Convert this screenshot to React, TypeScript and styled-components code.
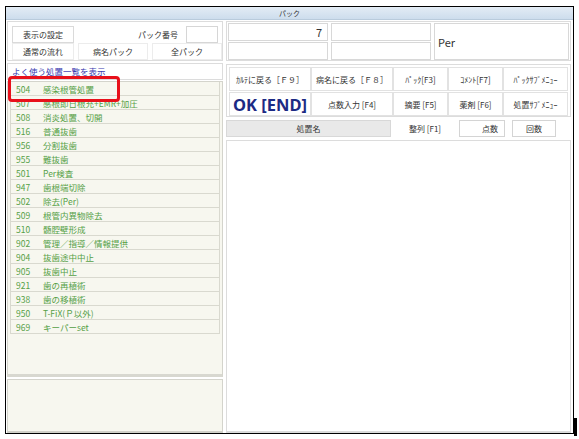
import React from "react";
import styled, { createGlobalStyle } from "styled-components";

const GlobalStyle = createGlobalStyle`
  html, body {
    margin: 0;
    padding: 0;
    background: #ffffff;
    font-family: "Noto Sans CJK JP", "Noto Sans", sans-serif;
  }
`;

const Page = styled.div`
  width: 579px;
  height: 439px;
  padding: 6px 0 0 5px;
  box-sizing: border-box;
`;

const Window = styled.div`
  position: relative;
  width: 569px;
  height: 428px;
  border: 1px solid #000;
  box-sizing: border-box;
  display: flex;
  flex-direction: column;
  background: #ffffff;
`;

const Shadow = styled.div`
  position: absolute;
  right: -4px;
  bottom: -3px;
  width: 3px;
  height: 18px;
  background: #000;
`;

const TitleBar = styled.div`
  height: 12px;
  background: linear-gradient(#e3ecf5, #cddded);
  border-bottom: 1px solid #b9cbdc;
  font-size: 7px;
  line-height: 12px;
  color: #333;
  text-align: center;
`;

const Body = styled.div`
  flex: 1;
  display: flex;
  gap: 3px;
  padding: 1px 1px 0 1px;
  min-height: 0;
`;

const LeftCol = styled.div`
  width: 216px;
  display: flex;
  flex-direction: column;
`;

const RightCol = styled.div`
  flex: 1;
  display: flex;
  flex-direction: column;
  gap: 3px;
  padding-right: 1px;
`;

const Panel = styled.div`
  border: 1px solid #dcdcdc;
  background: #fff;
  box-sizing: border-box;
`;

const Controls = styled(Panel)`
  height: 40px;
  padding: 4px 0 0 4px;
  display: grid;
  grid-template-columns: 62px 70px 70px;
  grid-template-rows: 17px 17px;
  column-gap: 4px;
`;

const FlatButton = styled.div<{ $bordered?: boolean }>`
  border: 1px solid ${(p) => (p.$bordered ? "#dadada" : "#ececec")};
  background: #fff;
  font-size: 8px;
  color: #333;
  display: flex;
  align-items: center;
  justify-content: center;
  box-sizing: border-box;
`;

const NumberField = styled.div`
  grid-column: 2 / 4;
  display: flex;
  align-items: center;
  justify-content: flex-end;
  gap: 8px;
  font-size: 8px;
  color: #333;
  padding-right: 4px;
`;

const SmallInput = styled.div`
  width: 32px;
  height: 17px;
  border: 1px solid #d6d6d6;
  box-sizing: border-box;
  background: #fff;
`;

const LinkBox = styled(Panel)`
  height: 17px;
  margin-top: 2px;
  padding-left: 4px;
  font-size: 8.5px;
  line-height: 15px;
  color: #3a3ab0;
  text-decoration: underline;
`;

const ListBox = styled.div`
  position: relative;
  height: 296px;
  margin-top: 1px;
  border: 1px solid #d4d4cc;
  border-bottom: 3px solid #d8d8d0;
  background: #f7f7ef;
  box-sizing: border-box;
  padding: 0 2px 0 2px;
`;

const Row = styled.div`
  height: 14px;
  display: flex;
  align-items: center;
  border: 1px solid #d9d9cf;
  border-top: none;
  box-sizing: border-box;
  font-size: 8.5px;
  color: #55a046;
  padding-left: 5px;
`;

const Code = styled.span`
  width: 27px;
`;

const Highlight = styled.div`
  position: absolute;
  left: 0px;
  top: -6px;
  width: 112px;
  height: 26px;
  border: 3px solid #e8101a;
  border-radius: 4px;
  box-sizing: border-box;
`;

const Memo = styled.div`
  flex: 1;
  margin-top: 2px;
  border: 1px solid #d4d4cc;
  border-bottom: 2px solid #d0d0c8;
  background: #f7f7ef;
`;

const Inputs = styled(Panel)`
  height: 40px;
  padding: 1px;
  display: grid;
  grid-template-columns: 100px 100px 1fr;
  grid-template-rows: 18px 18px;
  gap: 1px 3px;
`;

const Field = styled.div<{ $span?: boolean }>`
  border: 1px solid #d8d8d8;
  box-sizing: border-box;
  font-size: 11px;
  color: #333;
  display: flex;
  align-items: center;
  justify-content: ${(p) => (p.$span ? "flex-start" : "flex-end")};
  padding: ${(p) => (p.$span ? "0 0 0 3px" : "0 5px")};
  grid-row: ${(p) => (p.$span ? "1 / 3" : "auto")};
  grid-column: ${(p) => (p.$span ? "3" : "auto")};
`;

const Buttons = styled(Panel)`
  height: 53px;
  padding: 2px 2px 0 2px;
  display: grid;
  grid-template-columns: 82px 82px 55px 55px 1fr;
  grid-template-rows: 24px 24px;
  gap: 1px 0;
`;

const KeyButton = styled.div<{ $big?: boolean }>`
  border: 1px solid #e2e2e2;
  background: #fff;
  display: flex;
  align-items: center;
  justify-content: center;
  font-size: ${(p) => (p.$big ? "16.5px" : "8px")};
  font-weight: ${(p) => (p.$big ? 700 : 400)};
  color: ${(p) => (p.$big ? "#1c2a84" : "#333")};
  font-family: ${(p) =>
    p.$big ? '"Noto Sans", "Liberation Sans", sans-serif' : "inherit"};
  white-space: nowrap;
  box-sizing: border-box;
`;

const HeaderRow = styled.div`
  height: 17px;
  display: flex;
  align-items: stretch;
`;

const HeaderCell = styled.div<{ $w: number; $gray?: boolean; $box?: boolean; $right?: boolean; $gap?: number }>`
  width: ${(p) => p.$w}px;
  background: ${(p) => (p.$gray ? "#e9e9e9" : "#fff")};
  border: 1px solid ${(p) => (p.$gray ? "#d8d8d8" : p.$box ? "#d4d4d4" : "#fff")};
  box-sizing: border-box;
  font-size: 8px;
  color: #333;
  display: flex;
  align-items: center;
  justify-content: ${(p) => (p.$right ? "flex-end" : "center")};
  padding-right: ${(p) => (p.$right ? "6px" : "0")};
  margin-right: ${(p) => p.$gap ?? 2}px;
`;

const Content = styled.div`
  flex: 1;
  border: 1px solid #dcdcdc;
  border-bottom: 2px solid #dadada;
  background: #fff;
`;

const items: [string, string][] = [
  ["504", "感染根管処置"],
  ["507", "感根即日根充+EMR+加圧"],
  ["508", "消炎処置、切開"],
  ["516", "普通抜歯"],
  ["956", "分割抜歯"],
  ["955", "難抜歯"],
  ["501", "Per検査"],
  ["947", "歯根端切除"],
  ["502", "除去(Per)"],
  ["509", "根管内異物除去"],
  ["510", "髄腔壁形成"],
  ["902", "管理／指導／情報提供"],
  ["904", "抜歯途中中止"],
  ["905", "抜歯中止"],
  ["921", "歯の再植術"],
  ["938", "歯の移植術"],
  ["950", "T-FiX(Ｐ以外)"],
  ["969", "キーパーset"],
];

const keys: { label: string; big?: boolean }[] = [
  { label: "ｶﾙﾃに戻る［Ｆ９］" },
  { label: "病名に戻る［Ｆ８］" },
  { label: "ﾊﾟｯｸ[F3]" },
  { label: "ｺﾒﾝﾄ[F7]" },
  { label: "ﾊﾟｯｸｻﾌﾞﾒﾆｭｰ" },
  { label: "OK [END]", big: true },
  { label: "点数入力 [F4]" },
  { label: "摘要 [F5]" },
  { label: "薬剤 [F6]" },
  { label: "処置ｻﾌﾞﾒﾆｭｰ" },
];

export default function App() {
  return (
    <Page>
      <GlobalStyle />
      <Window>
        <TitleBar>パック</TitleBar>
        <Body>
          <LeftCol>
            <Controls>
              <FlatButton $bordered>表示の設定</FlatButton>
              <NumberField>
                パック番号
                <SmallInput />
              </NumberField>
              <FlatButton>通常の流れ</FlatButton>
              <FlatButton>病名パック</FlatButton>
              <FlatButton>全パック</FlatButton>
            </Controls>
            <LinkBox>よく使う処置一覧を表示</LinkBox>
            <ListBox>
              {items.map(([code, name]) => (
                <Row key={code}>
                  <Code>{code}</Code>
                  {name}
                </Row>
              ))}
              <Highlight />
            </ListBox>
            <Memo />
          </LeftCol>
          <RightCol>
            <Inputs>
              <Field>7</Field>
              <Field />
              <Field $span>Per</Field>
              <Field />
              <Field />
            </Inputs>
            <Buttons>
              {keys.map((k) => (
                <KeyButton key={k.label} $big={k.big}>
                  {k.label}
                </KeyButton>
              ))}
            </Buttons>
            <HeaderRow>
              <HeaderCell $w={165} $gray>
                処置名
              </HeaderCell>
              <HeaderCell $w={64}>整列 [F1]</HeaderCell>
              <HeaderCell $w={46} $box $right $gap={7}>
                点数
              </HeaderCell>
              <HeaderCell $w={44} $box>
                回数
              </HeaderCell>
            </HeaderRow>
            <Content />
          </RightCol>
        </Body>
        <Shadow />
      </Window>
    </Page>
  );
}
